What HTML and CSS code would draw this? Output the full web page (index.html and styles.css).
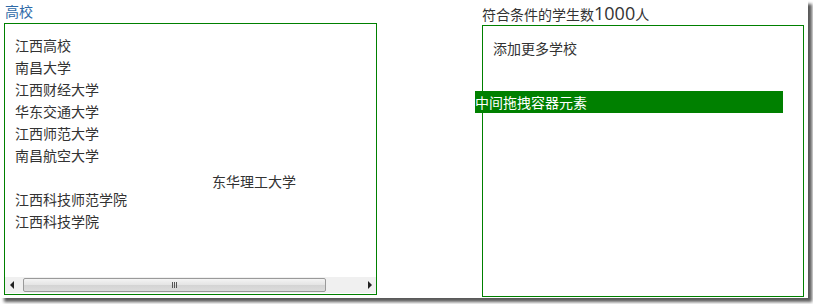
FILE: index.html
```html
<!DOCTYPE html>
<html lang="zh-CN">
<head>
<meta charset="utf-8">
<title>拖拽</title>
<link rel="stylesheet" href="styles.css">
</head>
<body>
<div class="frame">
  <div class="col col-left">
    <div class="title title-blue">高校</div>
    <div class="box box-left">
      <ul class="list">
        <li>江西高校</li>
        <li>南昌大学</li>
        <li>江西财经大学</li>
        <li>华东交通大学</li>
        <li>江西师范大学</li>
        <li>南昌航空大学</li>
        <li class="placeholder"></li>
        <li>江西科技师范学院</li>
        <li>江西科技学院</li>
      </ul>
      <div class="hscroll">
        <div class="sb-btn"><span class="tri tri-left"></span></div>
        <div class="sb-thumb"><span class="grip"></span></div>
        <div class="sb-rest"></div>
        <div class="sb-btn"><span class="tri tri-right"></span></div>
      </div>
    </div>
  </div>
  <div class="col col-right">
    <div class="title title-count">符合条件的学生数<span class="num">1000</span>人</div>
    <div class="box box-right">
      <ul class="list list-right">
        <li>添加更多学校</li>
      </ul>
    </div>
  </div>
  <div class="dragging">东华理工大学</div>
  <div class="drag-bar">中间拖拽容器元素</div>
</div>
</body>
</html>
```

FILE: styles.css
```css
html, body {
  margin: 0;
  padding: 0;
  background: #ffffff;
}
body {
  width: 813px;
  height: 304px;
  overflow: hidden;
  font-family: "Noto Sans CJK SC", "Noto Sans", sans-serif;
  font-size: 14px;
  color: #333333;
}
.frame {
  position: relative;
  width: 808px;
  height: 298px;
  background: #ffffff;
  box-shadow: 4px 4px 3px #5a5a5a;
  display: flex;
  align-items: flex-start;
}
.col {
  display: flex;
  flex-direction: column;
}
.col-left {
  margin-left: 4px;
  padding-top: 1px;
}
.col-right {
  margin-left: 105px;
  padding-top: 3px;
}
.title {
  line-height: 20px;
  height: 20px;
  margin-bottom: 2px;
  padding-left: 1px;
  white-space: nowrap;
}
.title-blue {
  color: #2e6aa8;
}
.title-count {
  color: #333333;
  padding-left: 0;
}
.num {
  font-family: "Open Sans", "Noto Sans", sans-serif;
  font-size: 18px;
  color: #333333;
}
.box {
  border: 1px solid #008000;
  box-sizing: border-box;
  height: 272px;
  display: flex;
  flex-direction: column;
}
.box-left {
  width: 373px;
}
.box-right {
  width: 322px;
}
.list {
  list-style: none;
  margin: 0;
  padding: 10px 0 0 10px;
  flex: 1;
}
.list li {
  line-height: 22px;
  height: 22px;
  white-space: nowrap;
}
.list-right {
  padding: 11px 0 0 10px;
}
.hscroll {
  height: 16px;
  display: flex;
  background: #f0f0f0;
  margin-bottom: 1px;
}
.sb-btn {
  width: 18px;
  display: flex;
  align-items: center;
  justify-content: center;
}
.sb-btn:last-child {
  width: 17px;
}
.tri {
  width: 0;
  height: 0;
  border-top: 4px solid transparent;
  border-bottom: 4px solid transparent;
}
.tri-left {
  border-right: 4px solid #222222;
  margin-left: -4px;
}
.tri-right {
  border-left: 4px solid #222222;
  margin-left: 4px;
}
.sb-thumb {
  width: 303px;
  box-sizing: border-box;
  margin: 1px 0;
  border: 1px solid #9a9a9a;
  border-radius: 2px;
  background: linear-gradient(#f4f4f4, #e4e4e4 50%, #d4d4d4 51%, #dcdcdc);
  display: flex;
  align-items: center;
  justify-content: center;
}
.grip {
  width: 6px;
  height: 6px;
  background: repeating-linear-gradient(90deg, #555555 0, #555555 1px, transparent 1px, transparent 2px);
}
.sb-rest {
  flex: 1;
}
.dragging {
  position: absolute;
  left: 212px;
  top: 170px;
  line-height: 22px;
  white-space: nowrap;
}
.drag-bar {
  position: absolute;
  left: 475px;
  top: 91px;
  width: 308px;
  height: 22px;
  line-height: 22px;
  background: #008000;
  color: #ffffff;
  white-space: nowrap;
}
```
